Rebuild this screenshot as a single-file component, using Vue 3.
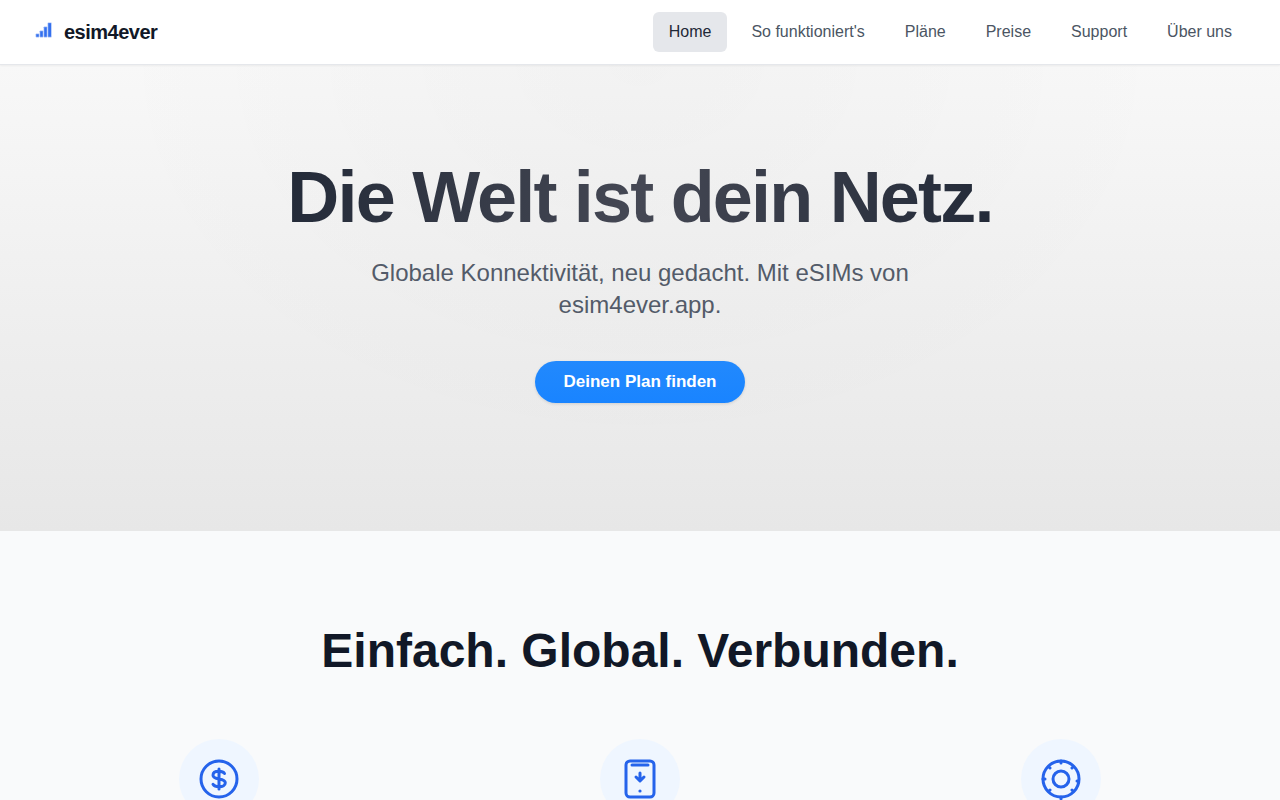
<script setup>
import { ref } from 'vue';

const active = ref('home');

const links = [
  { id: 'home', label: 'Home' },
  { id: 'how', label: "So funktioniert's" },
  { id: 'plans', label: 'Pläne' },
  { id: 'prices', label: 'Preise' },
  { id: 'support', label: 'Support' },
  { id: 'about', label: 'Über uns' },
];
</script>

<template>
  <div class="page">
    <header class="header">
      <a href="#home" class="brand" @click="active = 'home'">
        <svg class="brand-icon" viewBox="0 0 24 24" aria-hidden="true">
          <g fill="#3470ee" stroke="#dbe5fb" stroke-width="0.6">
            <rect x="3.8" y="13.8" width="3.4" height="3.4" rx="0.6" />
            <rect x="7.8" y="10.8" width="3.4" height="6.4" rx="0.4" />
            <rect x="11.8" y="6.8" width="3.4" height="10.4" rx="0.4" />
            <rect x="15.8" y="2.7" width="3.7" height="14.5" rx="0.4" />
          </g>
        </svg>
        <span>esim4ever</span>
      </a>
      <nav class="nav">
        <a
          v-for="link in links"
          :key="link.id"
          :href="'#' + link.id"
          :class="{ 'active': active === link.id }"
          @click="active = link.id"
        >{{ link.label }}</a>
      </nav>
    </header>

    <main>
      <section class="hero">
        <h1>Die Welt ist dein Netz.</h1>
        <p>Globale Konnektivität, neu gedacht. Mit eSIMs von esim4ever.app.</p>
        <a href="#plans" class="cta" @click="active = 'plans'">Deinen Plan finden</a>
      </section>

      <section class="features">
        <h2>Einfach. Global. Verbunden.</h2>
        <div class="feature-grid">
          <div class="feature-icon">
            <svg viewBox="0 0 48 48" aria-hidden="true">
              <circle cx="24" cy="24" r="18" />
              <path d="M24 14v20M29.5 18.5c-1-1.5-3-2.2-5.5-2.2-3.5 0-6 1.5-6 3.9 0 5.4 12.3 2 12.3 7.6 0 2.5-2.7 4-6.1 4-2.8 0-5.2-.8-6.2-2.5" />
            </svg>
          </div>
          <div class="feature-icon">
            <svg viewBox="0 0 48 48" aria-hidden="true">
              <rect x="10" y="6" width="28" height="36" rx="4" />
              <path d="M16 10h16M24 18v7M20 22l4 4 4-4" />
              <circle cx="24" cy="36" r="1.6" class="dot" />
            </svg>
          </div>
          <div class="feature-icon">
            <svg viewBox="0 0 48 48" aria-hidden="true">
              <circle cx="24" cy="24" r="18" />
              <circle cx="24" cy="24" r="8" />
              <path d="M24 6v2M24 42v2M6 24h2M40 26h1M12.5 12.5l.5.5M35 13l.5-.5M12.5 35.5l.5-.5M35 35l.5.5" />
            </svg>
          </div>
        </div>
      </section>
    </main>
  </div>
</template>

<style>
body {
  margin: 0;
  background: #f9fafb;
}
</style>

<style scoped>
.page {
  font-family: 'Liberation Sans', Arial, sans-serif;
  font-size: 16px;
  line-height: 24px;
  color: #111827;
}

.page a {
  text-decoration: none;
}

.header {
  position: relative;
  display: flex;
  align-items: center;
  justify-content: space-between;
  padding: 12px 32px;
  background: #ffffff;
  border-bottom: 1px solid #e5e7eb;
  box-shadow: 0 1px 2px rgba(0, 0, 0, 0.05);
}

.brand {
  display: flex;
  align-items: center;
  gap: 8px;
  color: #111827;
  font-size: 20px;
  font-weight: bold;
  letter-spacing: -0.025em;
}

.brand-icon {
  width: 24px;
  height: 24px;
}

.nav {
  display: flex;
  gap: 8px;
}

.nav a {
  padding: 8px 16px;
  border-radius: 6px;
  color: #4b5563;
}

.nav a.active {
  background: #e5e7eb;
  color: #1f2937;
}

.hero {
  display: flex;
  flex-direction: column;
  align-items: center;
  padding: 96px 32px 128px;
  text-align: center;
  background:
    radial-gradient(ellipse at top, rgba(0, 0, 0, 0.024), transparent 60%),
    linear-gradient(#f8f8f8, #e7e7e7);
}

.hero h1 {
  margin: 0 0 24px;
  font-size: 72px;
  line-height: 72px;
  letter-spacing: -0.025em;
  color: transparent;
  background: linear-gradient(100deg, #232a38, #454854 50%, #232a38);
  -webkit-background-clip: text;
  background-clip: text;
}

.hero p {
  max-width: 576px;
  margin: 0 0 40px;
  font-size: 24px;
  line-height: 32px;
  color: #535b69;
}

.cta {
  padding: 9px 28px;
  border-radius: 24px;
  background: linear-gradient(#2289fd, #1984ff);
  box-shadow: 0 1px 3px rgba(0, 0, 0, 0.12);
  color: #ffffff;
  font-size: 17px;
  font-weight: bold;
}

.features {
  padding: 96px 32px;
  background: #f9fafb;
}

.features h2 {
  margin: 0 0 64px;
  font-size: 48px;
  line-height: 48px;
  text-align: center;
}

.feature-grid {
  display: grid;
  grid-template-columns: repeat(3, 1fr);
  gap: 48px;
  justify-items: center;
}

.feature-icon {
  display: flex;
  align-items: center;
  justify-content: center;
  width: 80px;
  height: 80px;
  border-radius: 50%;
  background: #eff6ff;
}

.feature-icon svg {
  width: 48px;
  height: 48px;
  fill: none;
  stroke: #2563eb;
  stroke-width: 3;
  stroke-linecap: round;
  stroke-linejoin: round;
}

.feature-icon .dot {
  fill: #2563eb;
  stroke: none;
}
</style>
